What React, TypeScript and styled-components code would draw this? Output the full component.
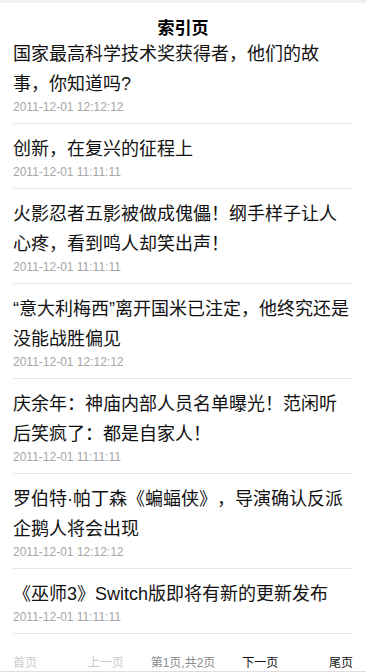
import React from "react";
import styled, { createGlobalStyle } from "styled-components";

const GlobalStyle = createGlobalStyle`
  html, body {
    margin: 0;
    padding: 0;
    background: #ffffff;
  }
  body {
    font-family: "Liberation Sans", "Noto Sans CJK SC", sans-serif;
    -webkit-font-smoothing: antialiased;
    text-spacing-trim: space-all;
  }
`;

const Page = styled.div`
  display: flex;
  flex-direction: column;
  width: 366px;
  background: #fff;
  border-top: 3px solid #f0f0f0;
`;

const Header = styled.header`
  height: 35px;
  padding-top: 16px;
  box-sizing: border-box;
  text-align: center;
  font-size: 17px;
  font-weight: 700;
  line-height: 19px;
  color: #000;
`;

const List = styled.ul`
  list-style: none;
  margin: 0;
  padding: 0 13px;
`;

const Item = styled.li`
  padding: 10px 0 8px;
  border-bottom: 1px solid #e6e6e6;
  &:first-child {
    padding-top: 1px;
  }
`;

const Title = styled.div`
  font-size: 18px;
  line-height: 30px;
  color: #111;
  text-spacing-trim: space-all;
`;

const Time = styled.div`
  font-family: "Liberation Sans", Arial, sans-serif;
  font-size: 12px;
  line-height: 16px;
  color: #a6a6a6;
`;

const Pager = styled.nav`
  display: grid;
  grid-template-columns: 1fr auto auto auto 1fr;
  column-gap: 27px;
  height: 38px;
  box-sizing: border-box;
  padding: 21px 13px 0;
  border-bottom: 1px solid #dedede;
  font-size: 12px;
  line-height: 16px;
`;

const PagerLink = styled.span<{ $tone: "off" | "info" | "on"; $align?: "left" | "right" }>`
  color: ${(p) => (p.$tone === "off" ? "#cacaca" : p.$tone === "info" ? "#8a8a8a" : "#111")};
  text-align: ${(p) => p.$align ?? "center"};
  white-space: nowrap;
`;

const news = [
  { title: "国家最高科学技术奖获得者，他们的故事，你知道吗?", time: "2011-12-01 12:12:12" },
  { title: "创新，在复兴的征程上", time: "2011-12-01 11:11:11" },
  { title: "火影忍者五影被做成傀儡！纲手样子让人心疼，看到鸣人却笑出声！", time: "2011-12-01 11:11:11" },
  { title: "“意大利梅西”离开国米已注定，他终究还是没能战胜偏见", time: "2011-12-01 12:12:12" },
  { title: "庆余年：神庙内部人员名单曝光！范闲听后笑疯了：都是自家人！", time: "2011-12-01 11:11:11" },
  { title: "罗伯特·帕丁森《蝙蝠侠》，导演确认反派企鹅人将会出现", time: "2011-12-01 12:12:12" },
  { title: "《巫师3》Switch版即将有新的更新发布", time: "2011-12-01 11:11:11" },
];

export default function App() {
  return (
    <>
      <GlobalStyle />
      <Page>
        <Header>索引页</Header>
        <List>
          {news.map((n, i) => (
            <Item key={i}>
              <Title>{n.title}</Title>
              <Time>{n.time}</Time>
            </Item>
          ))}
        </List>
        <Pager>
          <PagerLink $tone="off" $align="left">首页</PagerLink>
          <PagerLink $tone="off">上一页</PagerLink>
          <PagerLink $tone="info">第1页,共2页</PagerLink>
          <PagerLink $tone="on">下一页</PagerLink>
          <PagerLink $tone="on" $align="right">尾页</PagerLink>
        </Pager>
      </Page>
    </>
  );
}
